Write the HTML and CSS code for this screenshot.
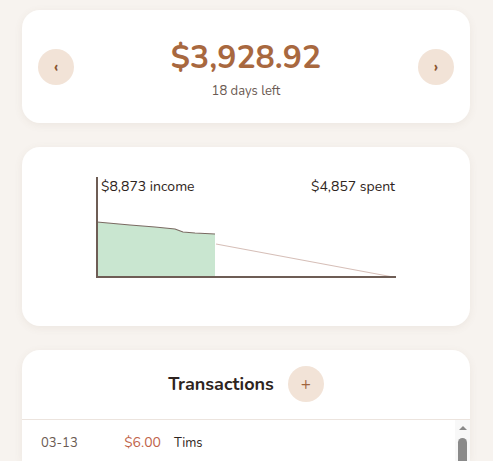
FILE: index.html
```html
<!DOCTYPE html>
<html lang="en">
<head>
    <meta charset="UTF-8">
    <meta name="viewport" content="width=device-width, initial-scale=1.0">
    <title>Budget</title>
    <link rel="stylesheet" href="styles.css">
</head>
<body>
    <main class="page">
        <section class="card balance">
            <button class="round-btn" type="button">&lsaquo;</button>
            <div class="balance-info">
                <div class="balance-amount">$3,928.92</div>
                <div class="balance-days">18 days left</div>
            </div>
            <button class="round-btn" type="button">&rsaquo;</button>
        </section>

        <section class="card chart-card">
            <svg class="chart" width="302" height="102" viewBox="0 0 302 102">
                <polygon class="chart-fill" points="2,45 35,48 60,50 80,52 88,55 100,56 120,57 120,100 2,100"/>
                <polyline class="chart-line" points="2,45 35,48 60,50 80,52 88,55 100,56 120,57"/>
                <line class="chart-plan" x1="121" y1="67" x2="298" y2="100"/>
                <line class="chart-axis" x1="2" y1="0" x2="2" y2="101"/>
                <line class="chart-axis" x1="1" y1="100" x2="301" y2="100"/>
                <text class="chart-label" x="6" y="14">$8,873 income</text>
                <text class="chart-label" x="300" y="14" text-anchor="end">$4,857 spent</text>
            </svg>
        </section>

        <section class="card transactions">
            <div class="tx-header">
                <h2>Transactions</h2>
                <button class="round-btn" type="button">+</button>
            </div>
            <div class="tx-list">
                <div class="tx-rows">
                    <div class="tx-row">
                        <span class="tx-date">03-13</span>
                        <span class="tx-amount">$6.00</span>
                        <span class="tx-name">Tims</span>
                    </div>
                </div>
                <div class="scrollbar">
                    <div class="scroll-arrow"></div>
                    <div class="scroll-thumb"></div>
                </div>
            </div>
        </section>
    </main>
</body>
</html>
```

FILE: styles.css
```css
body {
    margin: 0;
    background-color: #f7f3ef;
    font-family: "Nunito", "Lato", "Noto Sans", sans-serif;
    color: #2e2420;
}

.page {
    display: flex;
    flex-direction: column;
    gap: 24px;
    padding: 10px 23px 0 22px;
}

.card {
    background-color: #ffffff;
    border-radius: 18px;
    box-shadow: 0 2px 8px rgba(120, 90, 60, 0.08);
}

.round-btn {
    width: 36px;
    height: 36px;
    border: none;
    border-radius: 50%;
    background-color: #f2e3d7;
    color: #8a5530;
    font-family: inherit;
    font-size: 16px;
    font-weight: 700;
    line-height: 1;
    padding: 0;
    cursor: pointer;
}

/* saldo */
.balance {
    height: 113px;
    display: flex;
    align-items: center;
    justify-content: space-between;
    padding: 0 16px;
    box-sizing: border-box;
}

.balance-info {
    text-align: center;
}

.balance-amount {
    font-size: 32px;
    font-weight: 700;
    color: #a8683f;
    line-height: 40px;
    margin-top: 4px;
}

.balance-days {
    font-size: 13px;
    color: #6b5a52;
    margin-top: 4px;
}

/* grafico */
.chart-card {
    height: 179px;
    padding-top: 30px;
    box-sizing: border-box;
    display: flex;
    justify-content: center;
    align-items: flex-start;
}

.chart {
    display: block;
}

.chart-fill {
    fill: #c9e6d0;
}

.chart-line {
    fill: none;
    stroke: #7a6a62;
    stroke-width: 1.2;
}

.chart-plan {
    stroke: #d6bfb8;
    stroke-width: 1.2;
}

.chart-axis {
    stroke: #6e5d55;
    stroke-width: 2;
}

.chart-label {
    font-size: 14px;
    fill: #2e2420;
}

/* transacciones */
.transactions {
    border-radius: 18px 18px 0 0;
    overflow: hidden;
}

.tx-header {
    display: flex;
    justify-content: center;
    align-items: center;
    gap: 14px;
    padding: 16px 0 17px;
    border-bottom: 1px solid #ece4de;
}

.tx-header h2 {
    margin: 0;
    font-size: 18px;
    font-weight: 700;
    color: #2e2420;
}

.tx-header .round-btn {
    font-weight: 400;
    font-size: 17px;
    color: #a0643c;
}

.tx-list {
    display: flex;
    height: 41px;
}

.tx-rows {
    flex: 1;
}

.tx-row {
    display: grid;
    grid-template-columns: 56px 77px 1fr;
    align-items: center;
    padding: 13px 19px 11px;
    font-size: 13px;
}

.tx-date {
    color: #6b5a52;
}

.tx-amount {
    color: #c0644a;
    text-align: right;
    font-size: 14px;
    padding-right: 13px;
}

.tx-name {
    color: #2e2420;
}

/* barra de desplazamiento */
.scrollbar {
    width: 15px;
    background-color: #f8f8f8;
    display: flex;
    flex-direction: column;
    align-items: center;
    padding-top: 6px;
    box-sizing: border-box;
}

.scroll-arrow {
    width: 0;
    height: 0;
    border-left: 4px solid transparent;
    border-right: 4px solid transparent;
    border-bottom: 4px solid #8a8a8a;
}

.scroll-thumb {
    width: 9px;
    flex: 1;
    margin-top: 8px;
    background-color: #8a8a8a;
    border-radius: 5px 5px 0 0;
}
```
